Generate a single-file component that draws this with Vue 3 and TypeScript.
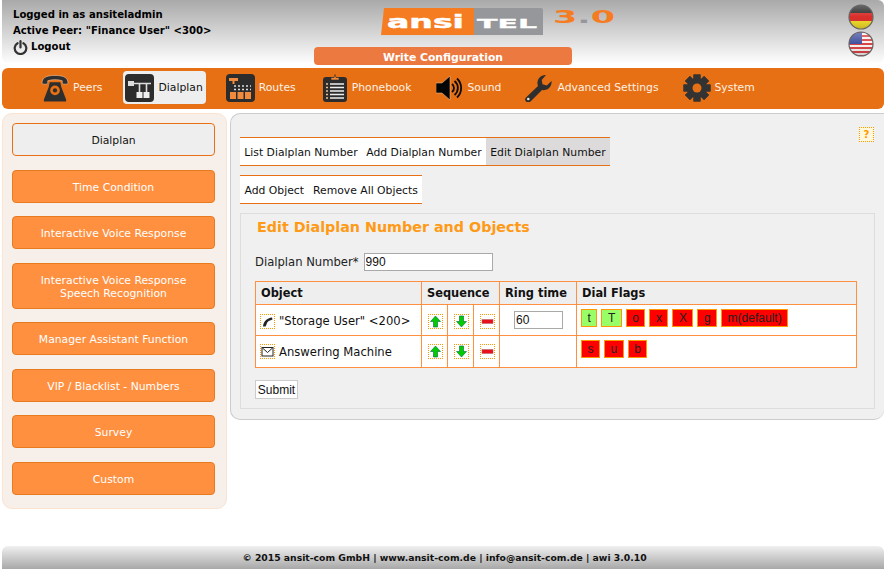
<script setup lang="ts">
const navItems = [
  { key: 'peers', label: 'Peers' },
  { key: 'dialplan', label: 'Dialplan', active: true },
  { key: 'routes', label: 'Routes' },
  { key: 'phonebook', label: 'Phonebook' },
  { key: 'sound', label: 'Sound' },
  { key: 'advanced', label: 'Advanced Settings' },
  { key: 'system', label: 'System' },
]

const sideItems = [
  { label: 'Dialplan', active: true },
  { label: 'Time Condition' },
  { label: 'Interactive Voice Response' },
  { label: 'Interactive Voice Response Speech Recognition', tall: true },
  { label: 'Manager Assistant Function' },
  { label: 'VIP / Blacklist - Numbers' },
  { label: 'Survey' },
  { label: 'Custom' },
]

const tabs = [
  { label: 'List Dialplan Number' },
  { label: 'Add Dialplan Number' },
  { label: 'Edit Dialplan Number', active: true },
]

const rows = [
  {
    icon: 'phone',
    name: '"Storage User" <200>',
    ring: '60',
    flags: [
      { t: 't', on: true },
      { t: 'T', on: true },
      { t: 'o' },
      { t: 'x' },
      { t: 'X' },
      { t: 'g' },
      { t: 'm(default)' },
    ],
  },
  {
    icon: 'mail',
    name: 'Answering Machine',
    ring: '',
    flags: [{ t: 's' }, { t: 'u' }, { t: 'b' }],
  },
]

const gearTeeth = [0, 45, 90, 135, 180, 225, 270, 315]
const usStripes = [0, 4, 8, 12, 16, 20, 24]
</script>

<template>
  <div class="page">
    <header class="top">
      <div class="user">
        <div>Logged in as ansiteladmin</div>
        <div>Active Peer: "Finance User" &lt;300&gt;</div>
        <div class="logout">
          <svg width="15" height="15" viewBox="0 0 15 15">
            <path d="M4.6 3.2a5.8 5.8 0 1 0 5.8 0" fill="none" stroke="#333" stroke-width="2.2" stroke-linecap="round" />
            <path d="M7.5 1.2v6.2" stroke="#333" stroke-width="2.2" stroke-linecap="round" />
          </svg>
          Logout
        </div>
      </div>

      <div class="brand">
        <svg class="logo" width="234" height="28" viewBox="0 0 234 28">
          <path d="M3 0h90v27H0z" fill="#f57c20" />
          <path d="M93 0h67q2 0 2 2v25H93z" fill="#96979a" />
          <text x="6" y="20" textLength="77" lengthAdjust="spacingAndGlyphs" class="logo-txt">ansi</text>
          <text x="96" y="20" textLength="60" lengthAdjust="spacingAndGlyphs" class="logo-tel">TEL</text>
          <text x="172" y="15" textLength="62" lengthAdjust="spacingAndGlyphs" class="logo-ver">3<tspan fill="#96979a">.</tspan>0</text>
        </svg>
        <div class="write">Write Configuration</div>
      </div>

      <div class="flags">
        <svg width="26" height="26" viewBox="0 0 26 26">
          <defs>
            <clipPath id="ball"><circle cx="13" cy="13" r="12" /></clipPath>
            <linearGradient id="gloss" x1="0" y1="0" x2="0" y2="1">
              <stop offset="0" stop-color="#fff" stop-opacity=".35" />
              <stop offset=".5" stop-color="#fff" stop-opacity=".05" />
              <stop offset="1" stop-color="#000" stop-opacity=".2" />
            </linearGradient>
          </defs>
          <g clip-path="url(#ball)">
            <rect width="26" height="9" fill="#222" />
            <rect y="9" width="26" height="8" fill="#d8231f" />
            <rect y="17" width="26" height="9" fill="#efd81c" />
            <rect width="26" height="26" fill="url(#gloss)" />
          </g>
          <circle cx="13" cy="13" r="12" fill="none" stroke="#666" stroke-width="1.2" />
        </svg>
        <svg width="26" height="26" viewBox="0 0 26 26">
          <g clip-path="url(#ball)">
            <rect width="26" height="26" fill="#f4f0f0" />
            <rect v-for="y in usStripes" :key="y" :y="y" width="26" height="2" fill="#d8383a" />
            <rect width="14" height="13" fill="#37479a" />
            <rect width="26" height="26" fill="url(#gloss)" />
          </g>
          <circle cx="13" cy="13" r="12" fill="none" stroke="#666" stroke-width="1.2" />
        </svg>
      </div>
    </header>

    <nav class="nav">
      <div v-for="item in navItems" :key="item.key" class="nav-item" :class="{ active: item.active }">
        <span class="nav-icon">
          <svg v-if="item.key === 'peers'" width="28" height="28" viewBox="0 0 29 28">
            <path d="M1 9C1 2 8 1 14.500 1S28 2 28 9c0 1.500-6 1.500-6 0V6.500c-4-1.500-11-1.500-15 0V9c0 1.500-6 1.500-6 0z" fill="#2e2e2e" stroke="#f6c9a5" stroke-width=".6" />
            <path d="M9 8h11l1 5 5 13v2H3v-2l5-13z" fill="#2e2e2e" />
            <circle cx="14.500" cy="16.500" r="5" fill="#e87014" />
            <circle cx="14.500" cy="16.500" r="2.200" fill="#2e2e2e" />
          </svg>

          <svg v-else-if="item.key === 'dialplan'" width="29" height="28" viewBox="0 0 29 28">
            <rect width="29" height="28" rx="4" fill="#2c2c2c" />
            <rect x="3" y="7" width="6" height="5" fill="#ddd" />
            <path d="M9 9.500h17M14.500 9.500V18M21.500 9.500V18" stroke="#ddd" stroke-width="1.600" fill="none" />
            <rect x="11.500" y="18" width="6" height="6" fill="#eee" />
            <rect x="18.500" y="18" width="6" height="6" fill="#eee" />
          </svg>

          <svg v-else-if="item.key === 'routes'" width="29" height="28" viewBox="0 0 29 28">
            <rect width="29" height="28" rx="4" fill="#2c2c2c" />
            <rect x="3" y="4" width="9" height="3" fill="#f08a3c" />
            <rect x="6.500" y="7" width="2" height="3" fill="#f08a3c" />
            <path d="M8 12h17M8 15.500h17" stroke="#ddd" stroke-width="1.500" stroke-dasharray="2 2" />
            <rect x="4" y="18" width="6" height="7" fill="#f08a3c" />
            <rect x="11.500" y="18" width="6" height="7" fill="#f08a3c" />
            <rect x="19" y="18" width="6" height="7" fill="#f08a3c" />
          </svg>

          <svg v-else-if="item.key === 'phonebook'" width="25" height="28" viewBox="0 0 25 28">
            <rect y="3" width="24" height="25" rx="3" fill="#2c2c2c" />
            <path d="M8 3.500h3l1-3 1 3h3v2.500H8z" fill="#f08a3c" stroke="#2c2c2c" stroke-width=".6" />
            <path d="M7 10h14M7 13.500h14M7 17h14M7 20.500h14M7 24h14" stroke="#eee" stroke-width="1.500" />
            <path d="M3 10h2M3 13.500h2M3 17h2M3 20.500h2M3 24h2" stroke="#f0c090" stroke-width="1.500" />
          </svg>

          <svg v-else-if="item.key === 'sound'" width="27" height="28" viewBox="0 0 27 28">
            <path d="M0 9h6l8-7v24l-8-7H0z" fill="#050505" stroke="#f6c9a5" stroke-width=".5" />
            <g fill="none" stroke="#0a0a0a" stroke-width="1.800">
              <path d="M16 10a5 5 0 0 1 0 8" />
              <path d="M18.500 7a9 9 0 0 1 0 14" />
              <path d="M21 4.500a13 13 0 0 1 0 19" />
            </g>
          </svg>

          <svg v-else-if="item.key === 'advanced'" width="29" height="28" viewBox="0 0 29 28">
            <path d="M22 1a8 8 0 0 0-8 11L2 23.500a3 3 0 0 0 4.500 4L18 16a8 8 0 0 0 9.500-9l-4.700 4.500-4.300-1.200-.8-4.300z" fill="#2e2e2e" />
            <circle cx="4.300" cy="25" r="1.300" fill="#e8e0d8" />
          </svg>

          <svg v-else width="28" height="28" viewBox="0 0 28 28">
            <rect v-for="a in gearTeeth" :key="a" x="10.500" y="0.500" width="7" height="27" fill="#333" :transform="`rotate(${a} 14 14)`" />
            <circle cx="14" cy="14" r="10" fill="#333" />
            <circle cx="14" cy="14" r="4.500" fill="#e87014" />
          </svg>
        </span>

        <span>{{ item.label }}</span>
      </div>
    </nav>

    <div class="body">
      <aside class="side">
        <div v-for="s in sideItems" :key="s.label" class="side-btn" :class="{ active: s.active, tall: s.tall }">
          {{ s.label }}
        </div>
      </aside>

      <main class="main">
        <div class="help">?</div>

        <div class="tabs">
          <div v-for="t in tabs" :key="t.label" class="tab" :class="{ active: t.active }">{{ t.label }}</div>
        </div>
        <div class="tabs sub">
          <div class="tab">Add Object</div>
          <div class="tab">Remove All Objects</div>
        </div>

        <section class="box">
          <h2>Edit Dialplan Number and Objects</h2>
          <div class="field">
            <label>Dialplan Number*</label>
            <input type="text" value="990" />
          </div>

          <table>
            <colgroup>
              <col style="width: 166px" />
              <col style="width: 26px" />
              <col style="width: 26px" />
              <col style="width: 26px" />
              <col style="width: 77px" />
              <col />
            </colgroup>
            <thead>
              <tr>
                <th>Object</th>
                <th colspan="3">Sequence</th>
                <th>Ring time</th>
                <th>Dial Flags</th>
              </tr>
            </thead>
            <tbody>
              <tr v-for="r in rows" :key="r.name">
                <td class="c-top">
                  <div class="obj">
                    <span class="ico">
                      <svg v-if="r.icon === 'phone'" width="13" height="13" viewBox="0 0 13 13">
                        <path d="M2 11.500C2.500 6.500 6 3 11 2.500l.5 2-2.500 1C7 6 6 7.500 5.500 9.500l-1 2z" fill="#222" />
                      </svg>
                      <svg v-else width="13" height="13" viewBox="0 0 13 13">
                        <rect x="1" y="2.500" width="11" height="8.500" fill="#fff" stroke="#222" />
                        <path d="M1.500 3l5 4.500 5-4.500" fill="none" stroke="#222" />
                      </svg>
                    </span>
                    {{ r.name }}
                  </div>
                </td>
                <td class="c-top c-seq">
                  <span class="ico">
                    <svg width="13" height="13" viewBox="0 0 13 13"><path d="M6.500 1L11.500 6.500H8.500V12H4.500V6.500H1.500z" fill="#0c0" stroke="#064" stroke-width=".6" /></svg>
                  </span>
                </td>
                <td class="c-top c-seq">
                  <span class="ico">
                    <svg width="13" height="13" viewBox="0 0 13 13"><path d="M6.500 12L11.500 6.500H8.500V1H4.500V6.500H1.500z" fill="#0c0" stroke="#064" stroke-width=".6" /></svg>
                  </span>
                </td>
                <td class="c-top c-seq">
                  <span class="ico">
                    <svg width="13" height="13" viewBox="0 0 13 13"><rect x="1" y="4.500" width="11" height="4" fill="#e8101c" stroke="#a66" stroke-width=".5" /></svg>
                  </span>
                </td>
                <td>
                  <input v-if="r.ring" class="ring" type="text" :value="r.ring" />
                </td>
                <td class="c-flags">
                  <div class="flag-row">
                    <span v-for="f in r.flags" :key="f.t" class="flag" :class="{ on: f.on }">{{ f.t }}</span>
                  </div>
                </td>
              </tr>
            </tbody>
          </table>

          <button class="submit" type="button">Submit</button>
        </section>
      </main>
    </div>

    <footer class="foot">© 2015 ansit-com GmbH | www.ansit-com.de | info@ansit-com.de | awi 3.0.10</footer>
  </div>
</template>

<style>
html, body {
  margin: 0;
  background: #fff;
  overflow: hidden;
}
</style>

<style scoped>
.page {
  height: 569px;
  display: flex;
  flex-direction: column;
  font-family: "DejaVu Sans", Verdana, sans-serif;
  font-size: 10.800px;
  color: #111;
  box-sizing: border-box;
  padding-left: 2px;
}

.top {
  height: 63px;
  flex: none;
  display: grid;
  grid-template-columns: 1fr 258px 1fr;
  background: linear-gradient(#a9a9a9, #fdfdfd);
  border-radius: 0 6px 6px 6px;
}

.user {
  padding: 7px 0 0 11px;
  font-size: 10.100px;
  font-weight: bold;
  line-height: 16px;
  color: #000;
}

.logout {
  display: flex;
  align-items: center;
  gap: 3px;
}

.brand {
  padding-top: 8px;
}

.logo {
  display: block;
  margin-left: 67px;
  overflow: visible;
}

.logo-txt {
  font-family: "DejaVu Sans", sans-serif;
  font-weight: bold;
  font-size: 18px;
  fill: #fff;
  stroke: #fff;
  stroke-width: 0.5px;
}

.logo-tel {
  font-family: "DejaVu Sans", sans-serif;
  font-weight: bold;
  font-size: 13px;
  fill: #fff;
  stroke: #fff;
  stroke-width: 0.3px;
}

.logo-ver {
  font-family: "DejaVu Sans", sans-serif;
  font-weight: bold;
  font-size: 18px;
  fill: #f57c20;
}

.write {
  margin-top: 11px;
  height: 18px;
  line-height: 21px;
  background: #ec7a40;
  border-radius: 4px;
  color: #fff;
  font-weight: bold;
  text-align: center;
}

.flags {
  display: flex;
  flex-direction: column;
  align-items: flex-end;
  padding: 4px 10px 0 0;
  gap: 1px;
}

.flags svg {
  display: block;
}

.nav {
  margin-top: 5px;
  height: 41px;
  flex: none;
  box-sizing: border-box;
  display: flex;
  align-items: center;
  gap: 18px;
  padding: 0 0 2px 36px;
  background: #e87014;
  border-radius: 6px;
  color: #fdf0e4;
}

.nav-item {
  display: flex;
  align-items: center;
  gap: 4px;
  height: 33px;
  padding: 0 3px 0 1px;
  border-radius: 4px;
}

.nav-icon {
  width: 30px;
  height: 28px;
  display: flex;
  justify-content: flex-end;
}

.nav-item.active {
  background: #eeeeee;
  color: #111;
}

.body {
  flex: 1;
  min-height: 0;
  display: flex;
  align-items: flex-start;
  gap: 3px;
  margin-top: 4px;
}

.side {
  width: 225px;
  box-sizing: border-box;
  flex: none;
  height: 396px;
  padding: 9.250px 11px 9px 9px;
  display: flex;
  flex-direction: column;
  gap: 13.500px;
  background: #f7efe9;
  border: 1px solid #fbe3cf;
  border-radius: 10px;
}

.side-btn {
  height: 33px;
  flex: none;
  box-sizing: border-box;
  display: flex;
  align-items: center;
  justify-content: center;
  text-align: center;
  padding: 1.500px 24px 0;
  background: #ff9040;
  border: 1px solid #e87a20;
  border-radius: 4px;
  color: #fff;
  line-height: 13px;
}

.side-btn.tall {
  height: 46px;
}

.side-btn.active {
  background: #eeeeee;
  border-color: #e87014;
  color: #111;
}

.main {
  position: relative;
  flex: 1;
  height: 307px;
  box-sizing: border-box;
  padding: 23px 9px 0 9px;
  background: #f0f0f0;
  border: 1px solid #cccccc;
  border-right: none;
  border-radius: 10px 0 10px 10px;
}

.help {
  position: absolute;
  right: 10px;
  top: 13px;
  width: 13px;
  height: 13px;
  line-height: 13px;
  text-align: center;
  background: #fff8dc;
  border: 1px dotted #f90;
  color: #f90;
  font-size: 10px;
  font-weight: bold;
}

.tabs {
  display: flex;
  width: fit-content;
  height: 29px;
  box-sizing: border-box;
  margin-bottom: 9px;
  background: #fff;
  border-top: 1px solid #e87014;
  border-bottom: 1px solid #e87014;
}

.tab {
  box-sizing: border-box;
  height: 27px;
  padding: 1px 4.300px 0;
  line-height: 27px;
}

.sub .tab {
  padding-left: 4.500px;
  padding-right: 4.500px;
}

.tab.active {
  background: #dcdada;
}

.box {
  box-sizing: border-box;
  height: 196px;
  padding: 0 16px 0 14px;
  border: 1px solid #dddddd;
}

h2 {
  margin: 0;
  padding: 4px 0 0 2px;
  height: 26px;
  box-sizing: border-box;
  font-size: 14.300px;
  line-height: 18px;
  color: #ff9a16;
}

.field {
  display: flex;
  align-items: center;
  gap: 5px;
  margin-top: 13px;
  font-size: 11.600px;
}

.field label {
  color: #222;
}

input {
  box-sizing: border-box;
  font-family: "Liberation Sans", Arial, sans-serif;
  font-size: 12px;
  padding: 1px;
  border: 1px solid #a9a9a9;
  background: #fff;
  color: #111;
  outline: none;
}

.field input {
  width: 129px;
  height: 18px;
}

table {
  margin-top: 10px;
  width: 602px;
  table-layout: fixed;
  border-collapse: collapse;
  background: #fff;
  font-size: 11.600px;
}

th,
td {
  border: 1px solid #ff9040;
  padding: 0;
}

th {
  height: 22px;
  background: #eeeeee;
  text-align: left;
  padding-left: 5px;
  font-size: 11.400px;
  font-weight: bold;
  color: #111;
}

td {
  box-sizing: border-box;
  height: 31px;
}

tbody tr:last-child td {
  height: 32px;
}

.c-top {
  vertical-align: top;
  padding-top: 8px;
}

tbody tr:first-child .c-top {
  padding-top: 8.500px;
}

.obj {
  display: flex;
  align-items: center;
  gap: 4px;
  padding-left: 4px;
}

.c-seq {
  padding-left: 5.500px;
}

.ring {
  width: 49px;
  height: 18px;
  display: block;
  margin: 0 0 0 14px;
}

.ico {
  display: flex;
  box-sizing: border-box;
  width: 15px;
  height: 15px;
  align-items: center;
  justify-content: center;
  border: 1px dotted #f90;
}

.c-flags {
  padding: 4px 0 0 4px;
  vertical-align: top;
}

.flag-row {
  display: flex;
  gap: 4px;
}

.flag {
  box-sizing: border-box;
  height: 18px;
  line-height: 16px;
  padding: 0 5.500px;
  background: #ff0000;
  border: 1px solid #ff9900;
  font-family: "Liberation Sans", Arial, sans-serif;
  font-size: 12px;
  color: #222;
}

.flag.on {
  background: #99ff66;
}

.submit {
  display: block;
  margin-top: 12px;
  width: 43px;
  height: 19px;
  padding: 0;
  background: #fff;
  border: 1px solid #cccccc;
  font-family: "Liberation Sans", Arial, sans-serif;
  font-size: 12px;
  color: #111;
}

.foot {
  height: 23px;
  flex: none;
  box-sizing: border-box;
  padding-left: 3px;
  line-height: 24px;
  text-align: center;
  font-size: 9.250px;
  font-weight: bold;
  color: #111;
  background: linear-gradient(#f0f0f0, #a8a8a8);
  border-radius: 6px 6px 0 0;
}
</style>
